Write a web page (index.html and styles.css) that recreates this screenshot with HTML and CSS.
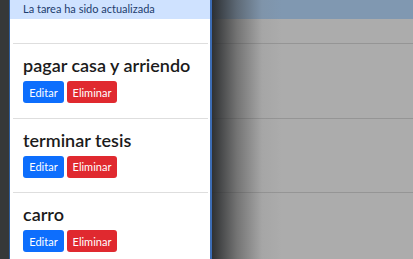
FILE: index.html
```html
<!DOCTYPE html>
<html lang="es">
<head>
    <meta charset="UTF-8">
    <meta name="viewport" content="width=device-width, initial-scale=1.0">
    <title>Tareas</title>
    <link rel="stylesheet" href="styles.css">
</head>
<body>

    <div class="screen">
        <div class="edge"></div>

        <!-- Panel with the task list -->
        <div class="panel">
            <div class="alert">La tarea ha sido actualizada</div>
            <div class="spacer"></div>

            <ul class="tasks">
                <li class="task">
                    <h3>pagar casa y arriendo</h3>
                    <div class="actions">
                        <button class="btn btn-edit">Editar</button>
                        <button class="btn btn-delete">Eliminar</button>
                    </div>
                </li>
                <li class="task">
                    <h3>terminar tesis</h3>
                    <div class="actions">
                        <button class="btn btn-edit">Editar</button>
                        <button class="btn btn-delete">Eliminar</button>
                    </div>
                </li>
                <li class="task">
                    <h3>carro</h3>
                    <div class="actions">
                        <button class="btn btn-edit">Editar</button>
                        <button class="btn btn-delete">Eliminar</button>
                    </div>
                </li>
            </ul>
        </div>

        <!-- Dimmed page behind the panel -->
        <div class="backdrop">
            <div class="backdrop-alert"></div>
            <div class="backdrop-spacer"></div>
            <div class="backdrop-row"></div>
            <div class="backdrop-row"></div>
            <div class="backdrop-row"></div>
        </div>
    </div>

</body>
</html>
```

FILE: styles.css
```css
body {
    margin: 0;
    padding: 0;
    font-family: Lato, "Noto Sans", sans-serif;
    background-color: #acacac;
    overflow: hidden;
}

.screen {
    display: flex;
    height: 259px;
}

.edge {
    width: 9px;
    background-color: #363839;
    flex-shrink: 0;
}

.panel {
    width: 200px;
    flex-shrink: 0;
    background-color: #fff;
    border-left: 1px solid #2f5d9c;
    border-right: 2px solid #3d6db5;
}

.alert {
    height: 19px;
    box-sizing: border-box;
    padding: 2px 0 0 13px;
    background-color: #cfe2ff;
    color: #1d3d6e;
    font-size: 11px;
    line-height: 14px;
}

.spacer {
    height: 24px;
}

.tasks {
    list-style-type: none;
    margin: 0 2px 0 3px;
    padding: 0;
}

.task {
    border-top: 1px solid #dedede;
    padding: 8px 4px 14.5px 10px;
}

.task h3 {
    margin: 0;
    font-size: 18px;
    font-weight: 600;
    line-height: 26px;
    white-space: nowrap;
    color: #1b1b1b;
}

.actions {
    display: flex;
    gap: 3px;
    margin-top: 3px;
}

.btn {
    height: 22px;
    padding: 0;
    border: none;
    border-radius: 3px;
    color: #fff;
    font-family: Lato, sans-serif;
    font-size: 11px;
}

.btn-edit {
    width: 41px;
    background-color: #0d6efd;
}

.btn-delete {
    width: 50px;
    background-color: #e0292f;
}

.backdrop {
    flex: 1;
    position: relative;
}

/* shadow cast by the panel */
.backdrop::after {
    content: "";
    position: absolute;
    top: 0;
    left: 0;
    bottom: 0;
    width: 70px;
    background: linear-gradient(to right, rgba(40, 42, 44, 0.95), rgba(60, 60, 60, 0.5) 25px, rgba(120, 120, 120, 0.12) 50px, rgba(172, 172, 172, 0));
}

.backdrop-alert {
    height: 19px;
    background-color: #8098b1;
}

.backdrop-spacer {
    height: 24px;
}

.backdrop-row {
    height: 74.5px;
    box-sizing: border-box;
    border-top: 1px solid #959595;
}
```
